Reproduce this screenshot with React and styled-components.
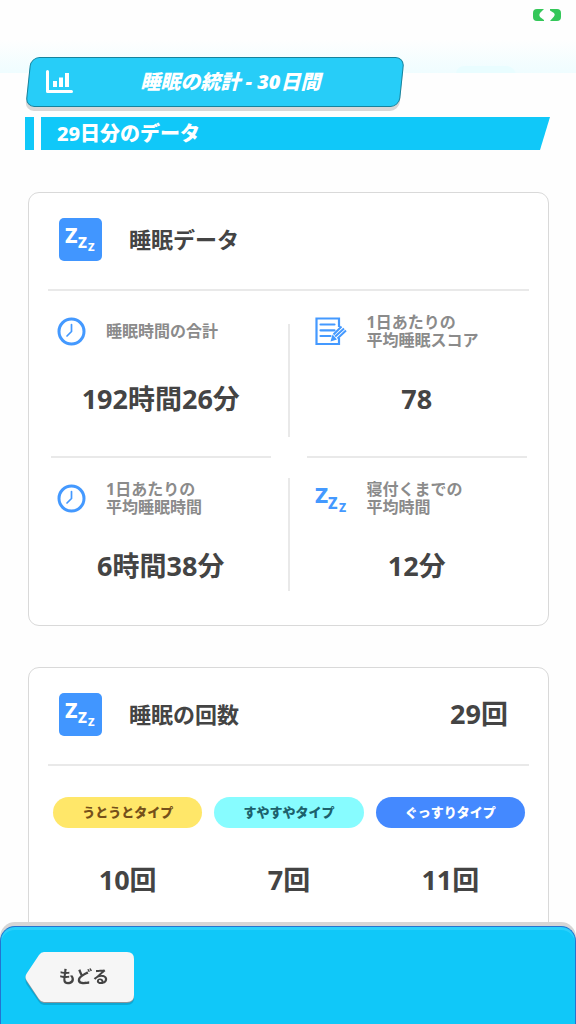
import styled, { createGlobalStyle } from 'styled-components'

const App = () => {
    return (
        <Page>
            <GlobalStyle />
            <StatusBar>
                <Cloud viewBox='0 0 60 7' aria-hidden='true'><path d='M0 7Q1 0 9 0H50Q57 0 60 7Z' fill='#e9fdff' /></Cloud>
                <BatteryIcon />
            </StatusBar>
            <TitleTag>
                <ChartIcon />
                <Title>睡眠の統計 - 30日間</Title>
            </TitleTag>
            <Banner>
                <BannerMark />
                <BannerText>29日分のデータ</BannerText>
            </Banner>

            <Cards>
                <Card>
                    <CardHeader>
                        <ZzzBadge />
                        <CardTitle>睡眠データ</CardTitle>
                    </CardHeader>
                    <Stats>
                        <Stat $line>
                            <StatHead><ClockIcon /><Label>睡眠時間の合計</Label></StatHead>
                            <Value>192時間26分</Value>
                        </Stat>
                        <Dividers><Divider /><Divider /></Dividers>
                        <Stat $line $right>
                            <StatHead><ScoreIcon /><Label>1日あたりの<br />平均睡眠スコア</Label></StatHead>
                            <Value>78</Value>
                        </Stat>
                        <Stat>
                            <StatHead><ClockIcon /><Label>1日あたりの<br />平均睡眠時間</Label></StatHead>
                            <Value>6時間38分</Value>
                        </Stat>
                        <Stat $right>
                            <StatHead><ZzzIcon /><Label>寝付くまでの<br />平均時間</Label></StatHead>
                            <Value>12分</Value>
                        </Stat>
                    </Stats>
                </Card>

                <Card>
                    <CardHeader>
                        <ZzzBadge />
                        <CardTitle>睡眠の回数</CardTitle>
                        <Value>29回</Value>
                    </CardHeader>
                    <Types>
                        {types.map(type => (
                            <Type key={type.name}>
                                <Pill $bg={type.bg} $color={type.color}>{type.name}</Pill>
                                <Value>{type.count}</Value>
                            </Type>
                        ))}
                    </Types>
                </Card>
            </Cards>

            <Footer>
                <BackButton type='button'>
                    <BackShape viewBox='0 0 109 54' preserveAspectRatio='none' aria-hidden='true'>
                        <path d='M19 3H102Q109 3 109 10V46Q109 53 102 53H19Q16 53 14 50L2 33Q-1 28 2 24L14 6Q16 3 19 3Z' fill='#0ba9d6' />
                        <path d='M19 1H102Q109 1 109 8V44Q109 51 102 51H19Q16 51 14 48L2 30Q-1 26 2 22L14 4Q16 1 19 1Z' fill='#8b9499' />
                        <path d='M19 0H102Q109 0 109 7V43Q109 50 102 50H19Q16 50 14 47L2 29Q-1 25 2 21L14 3Q16 0 19 0Z' fill='#f6f6f6' />
                    </BackShape>
                    <BackText>もどる</BackText>
                </BackButton>
            </Footer>
        </Page>
    )
}

export default App

const types = [
    { name: 'うとうとタイプ', count: '10回', bg: '#ffe769', color: '#75501a' },
    { name: 'すやすやタイプ', count: '7回', bg: '#87fcff', color: '#1c616c' },
    { name: 'ぐっすりタイプ', count: '11回', bg: '#4489ff', color: '#ffffff' },
]

const BatteryIcon = () => (
    <svg width='28' height='12' viewBox='0 0 28 12' aria-hidden='true'>
        <path d='M4 0H11L7 4Q5.500 6 7 8L11 11V12H4Q0 12 0 8V4Q0 0 4 0ZM17 0H24Q28 0 28 4V8Q28 12 24 12H17L21 7.500Q22.500 5.500 21 4L17 1.500Z' fill='#34c759' />
    </svg>
)

const ChartIcon = () => (
    <svg width='27' height='24' viewBox='0 0 27 24' aria-hidden='true'>
        <path d='M1.500 1.500V21.500H25.500' fill='none' stroke='#fff' strokeWidth='3' strokeLinecap='round' strokeLinejoin='round' />
        <path d='M7 11h4v6H7zM13 7.500h4v9.500h-4zM19 3h4v14h-4z' fill='#fff' />
    </svg>
)

const ClockIcon = () => (
    <svg width='29' height='29' viewBox='0 0 29 29' aria-hidden='true'>
        <circle cx='14.500' cy='14.500' r='12.500' fill='none' stroke='#4499ff' strokeWidth='3' />
        <path d='M14.500 7.500V14.500L10 19' fill='none' stroke='#4499ff' strokeWidth='1.700' strokeLinecap='round' />
    </svg>
)

const ScoreIcon = () => (
    <svg width='34' height='34' viewBox='0 0 34 34' fill='none' stroke='#4499ff' aria-hidden='true'>
        <path d='M26 13V4.500H3.500V30H26V24' strokeWidth='2.200' />
        <path d='M7.500 10.500H21.500M7.500 16.300H21.500M7.500 22H17.500' strokeWidth='2.200' strokeLinecap='round' />
        <path d='M17.500 27.500L19.500 20.500L24 25.500Z' fill='#4499ff' stroke='none' />
        <path d='M20.500 20.500L28.500 12.500M22.200 22.500L31 14.500M24.500 24.500L33 16.500' strokeWidth='2' />
    </svg>
)

const ZzzIcon = () => (
    <ZzzSvg width='34' height='34' viewBox='0 0 34 34' fill='#4499ff' aria-hidden='true'>
        <text x='2' y='22' fontSize='22'>Z</text>
        <text x='15' y='28' fontSize='16'>Z</text>
        <text x='26' y='31' fontSize='12'>Z</text>
    </ZzzSvg>
)

const ZzzBadge = () => (
    <Badge>
        <ZzzSvg width='43' height='43' viewBox='0 0 43 43' fill='#fff' aria-hidden='true'>
            <text x='6' y='25' fontSize='21'>Z</text>
            <text x='19' y='30' fontSize='15'>Z</text>
            <text x='29' y='33' fontSize='11'>Z</text>
        </ZzzSvg>
    </Badge>
)

const GlobalStyle = createGlobalStyle`
    * {
        box-sizing: border-box;
    }
    html {
        scrollbar-width: none;
    }
    body {
        margin: 0;
        background-color: #fefefe;
        color: #444444;
        font-family: 'Noto Sans', 'Noto Sans CJK JP', sans-serif;
        font-weight: 700;
    }
    h1, h2, p {
        margin: 0;
    }
`

const Page = styled.div`
    min-height: 100vh;
    padding-bottom: 98px;
    background: linear-gradient(#fefefe 40px, #effdff 73px, #fefefe 73px);
`

const StatusBar = styled.div`
    height: 57px;
    padding: 9px 15px 0 0;
    display: flex;
    justify-content: flex-end;
    position: relative;
`

const Cloud = styled.svg`
    position: absolute;
    top: 66px;
    right: 60px;
    width: 60px;
    height: 7px;
`

const TitleTag = styled.header`
    position: relative;
    z-index: 0;
    width: 65%;
    height: 50px;
    margin-left: 28px;
    padding: 0 82px 0 18px;
    display: flex;
    align-items: center;
    color: #ffffff;

    &::before {
        content: '';
        position: absolute;
        inset: 0;
        z-index: -1;
        background-color: #27cdf8;
        border: 1px solid #16839d;
        border-radius: 9px;
        box-shadow: 0 4px 0 #d8d8d8;
        transform: skewX(-6deg);
    }
`

const Title = styled.h1`
    flex: 1;
    font-size: 20px;
    font-style: italic;
    font-weight: 900;
    line-height: 28px;
    text-align: right;
    white-space: nowrap;
`

const Banner = styled.div`
    margin: 10px 26px 0 25px;
    height: 33px;
    display: flex;
    gap: 7px;
`

const BannerMark = styled.div`
    width: 9px;
    background-color: #10c8f9;
`

const BannerText = styled.h2`
    flex: 1;
    padding-left: 16px;
    background-color: #10c8f9;
    clip-path: polygon(0 0, 100% 0, calc(100% - 10px) 100%, 0 100%);
    color: #ffffff;
    font-size: 20px;
    font-weight: 800;
    line-height: 33px;
`

const Cards = styled.main`
    padding: 42px 27px 40px 28px;
    display: flex;
    flex-direction: column;
    gap: 41px;
`

const Card = styled.section`
    background-color: #ffffff;
    border: 1px solid #d9d9d9;
    border-radius: 11px;
`

const CardHeader = styled.div`
    height: 98px;
    margin: 0 19px;
    padding: 0 21px 4px 11px;
    display: flex;
    align-items: center;
    border-bottom: 2px solid #e9e9e9;
`

const Badge = styled.div`
    width: 43px;
    height: 43px;
    background-color: #4196ff;
    border-radius: 5px;
`

const ZzzSvg = styled.svg`
    display: block;
    font-family: 'Noto Sans', sans-serif;
    font-weight: 800;
`

const CardTitle = styled.h2`
    flex: 1;
    margin-left: 27px;
    font-size: 22px;
    line-height: 32px;
`

const Stats = styled.div`
    display: grid;
    grid-template-columns: 1fr 2px 1fr;
`

const Stat = styled.div`
    height: 167px;
    margin: ${props => props.$right ? '0 21px 0 17px' : '0 17px 0 22px'};
    padding-top: 20px;
    border-bottom: ${props => props.$line ? '2px solid #e9e9e9' : 'none'};
`

const StatHead = styled.div`
    height: 40px;
    margin-bottom: 28px;
    padding-left: 6px;
    display: flex;
    align-items: center;
    gap: 20px;
`

const Label = styled.p`
    color: #8b8b8b;
    font-size: 16px;
    line-height: 18px;
`

const Value = styled.p`
    font-size: 27px;
    line-height: 40px;
    text-align: center;
`

const Dividers = styled.div`
    grid-row: span 2;
    padding-top: 33px;
    display: flex;
    flex-direction: column;
    gap: 41px;
`

const Divider = styled.div`
    height: 113px;
    background-color: #e9e9e9;
`

const Types = styled.div`
    padding: 31px 23px 60px 24px;
    display: grid;
    grid-template-columns: repeat(3, 1fr);
    gap: 12px;
`

const Type = styled.div`
    display: flex;
    flex-direction: column;
    gap: 32px;
`

const Pill = styled.div`
    background-color: ${props => props.$bg};
    border-radius: 16px;
    color: ${props => props.$color};
    font-size: 13px;
    font-weight: 900;
    line-height: 31px;
    text-align: center;
`

const Footer = styled.footer`
    position: fixed;
    left: 0;
    right: 0;
    bottom: 0;
    height: 98px;
    padding: 25px 24px;
    background-color: #10c8f9;
    border: 1px solid #2474d0;
    border-bottom: none;
    border-radius: 15px 15px 0 0;
    box-shadow: 0 -4px 0 #d6d6d6, inset 0 3px 0 #2bcffa;
`

const BackButton = styled.button`
    position: relative;
    width: 109px;
    height: 50px;
    padding: 0 0 3px 9px;
    background: none;
    border: none;
    color: #444444;
    font-family: inherit;
    font-size: 17px;
    font-weight: 700;
    cursor: pointer;
`

const BackShape = styled.svg`
    position: absolute;
    top: 0;
    left: 0;
    width: 100%;
    height: 54px;
`

const BackText = styled.span`
    position: relative;
`
